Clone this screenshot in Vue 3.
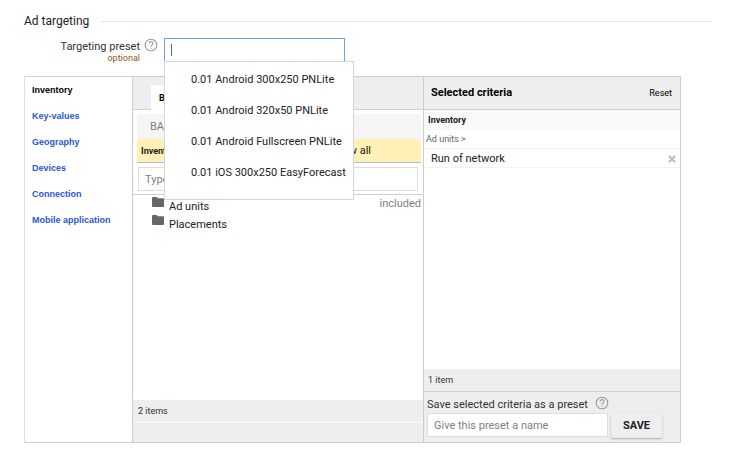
<script setup>
import { ref } from 'vue'

const preset = ref('')
const filter = ref('')
const presetName = ref('')
const presets = [
  '0.01 Android 300x250 PNLite',
  '0.01 Android 320x50 PNLite',
  '0.01 Android Fullscreen PNLite',
  '0.01 iOS 300x250 EasyForecast',
]
const sections = ['Inventory', 'Key-values', 'Geography', 'Devices', 'Connection', 'Mobile application']
const folders = [
  { name: 'Ad units', state: 'included' },
  { name: 'Placements', state: '' },
]
</script>

<template>
  <main class="page">
    <header class="heading">
      <h1>Ad targeting</h1>
      <span class="rule"></span>
    </header>

    <div class="preset-row">
      <label class="preset-label" for="preset">
        Targeting preset
        <small>optional</small>
      </label>
      <svg class="help" viewBox="0 0 14 14" aria-hidden="true">
        <circle cx="7" cy="7" r="5.8" />
        <path d="M5.1 5.6a1.9 1.9 0 1 1 3 1.5C7.4 7.6 7 7.9 7 8.7M7 9.7v1.1" />
      </svg>
      <div class="combo">
        <input id="preset" v-model="preset" type="text" autocomplete="off" />
        <span class="caret"></span>
        <ul class="menu">
          <li v-for="p in presets" :key="p"><button type="button" @click="preset = p">{{ p }}</button></li>
        </ul>
      </div>
    </div>

    <section class="panel">
      <nav class="sections">
        <a v-for="(s, i) in sections" :key="s" href="#" :class="{ current: i === 0 }">{{ s }}</a>
      </nav>

      <div class="browser">
        <div class="tabs"><button type="button" class="tab">Browse</button></div>
        <div class="tools">
          <button type="button" class="back">BACK</button>
          <div class="notice"><b>Inventory</b><a href="#">Show all</a></div>
          <input v-model="filter" class="field" type="text" aria-label="Filter" placeholder="Type to filter" />
        </div>
        <ul class="folders">
          <li v-for="f in folders" :key="f.name">
            <svg class="folder" viewBox="0 0 12 10" aria-hidden="true">
              <path d="M1 0h3.6l1.2 1.3H11q1 0 1 1V9q0 1-1 1H1Q0 10 0 9V1Q0 0 1 0z" />
            </svg>
            <span>{{ f.name }}</span>
            <em>{{ f.state }}</em>
          </li>
        </ul>
        <div class="count">2 items</div>
        <div class="base"></div>
      </div>

      <div class="selected">
        <div class="selected-head">
          <h2>Selected criteria</h2>
          <button type="button" class="reset">Reset</button>
        </div>
        <h3>Inventory</h3>
        <div class="path">Ad units &gt;</div>
        <div class="criterion">
          <span>Run of network</span>
          <button type="button" class="remove" aria-label="Remove">
            <svg viewBox="0 0 8 8"><path d="M1 1l6 6M7 1l-6 6" /></svg>
          </button>
        </div>
        <div class="count bottom">1 item</div>
        <form class="save" @submit.prevent>
          <div class="save-label">
            <label for="name">Save selected criteria as a preset</label>
            <svg class="help" viewBox="0 0 14 14" aria-hidden="true">
              <circle cx="7" cy="7" r="5.8" />
              <path d="M5.1 5.6a1.9 1.9 0 1 1 3 1.5C7.4 7.6 7 7.9 7 8.7M7 9.7v1.1" />
            </svg>
          </div>
          <div class="save-line">
            <input id="name" v-model="presetName" class="field" type="text" placeholder="Give this preset a name" />
            <button type="submit">SAVE</button>
          </div>
        </form>
      </div>
    </section>
  </main>
</template>

<style>
body {
  background: #fff;
}
</style>

<style scoped>
* {
  box-sizing: border-box;
}
.page {
  padding: 12px 56px 20px 24px;
  font: 11px/16px Roboto, sans-serif;
  color: #333;
}
h1, h2, h3, ul {
  margin: 0;
  padding: 0;
}
ul {
  list-style: none;
}
button, input {
  font: inherit;
  color: inherit;
  border: 0;
  margin: 0;
  padding: 0;
  background: none;
}
input::placeholder {
  color: #808080;
  opacity: 1;
}
a {
  text-decoration: none;
  color: inherit;
}
.heading {
  display: flex;
  align-items: center;
  gap: 12px;
  height: 18px;
  margin-right: -31px;
}
h1 {
  font-size: 12px;
  font-weight: 400;
  color: #222;
}
.rule {
  flex: 1;
  height: 1px;
  background: #e8e8e8;
}
.preset-row {
  display: flex;
  align-items: flex-start;
  height: 46px;
  padding-top: 8px;
}
.preset-label {
  width: 116px;
  padding-top: 1px;
  text-align: right;
}
.preset-label small {
  display: block;
  font-size: 9px;
  line-height: 6px;
  color: #8a5a22;
}
.help {
  flex: none;
  width: 14px;
  height: 14px;
  fill: none;
  stroke: #999;
  stroke-width: 1.1;
}
.preset-row .help {
  margin: 0 6px 0 4px;
}
.combo {
  position: relative;
  width: 181px;
}
.combo input {
  display: block;
  width: 100%;
  height: 24px;
  padding: 0 6px;
  border: 1px solid #6f9eee;
  outline: 0;
  background: #fff;
  caret-color: transparent;
}
.caret {
  position: absolute;
  left: 7px;
  top: 6px;
  width: 1px;
  height: 12px;
  background: #666;
}
.menu {
  position: absolute;
  z-index: 2;
  top: 23px;
  left: 0;
  width: 190px;
  padding: 2px 0 11px;
  border: 1px solid #d5d5d5;
  background: #fff;
}
.menu button {
  display: block;
  width: 100%;
  height: 31px;
  padding-left: 26px;
  text-align: left;
  color: #222;
  white-space: nowrap;
}
.panel {
  display: grid;
  grid-template-columns: 107px minmax(0, 1fr) 257px;
  min-height: 367px;
  border: 1px solid #cfcfcf;
  border-left-color: #e0e0e0;
}
.sections {
  display: flex;
  flex-direction: column;
  gap: 10px;
  padding: 5px 7px;
  font: bold 9px/16px "Liberation Sans", sans-serif;
  color: #2a56d6;
}
.sections .current {
  color: #000;
}
.browser {
  display: flex;
  flex-direction: column;
  border-left: 1px solid #ccc;
}
.tabs {
  display: flex;
  align-items: flex-end;
  height: 33px;
  padding-left: 18px;
  border-bottom: 1px solid #d0d0d0;
  background: #eee;
}
.tab {
  height: 25px;
  margin-bottom: -1px;
  padding: 0 8px;
  font-size: 9px;
  font-weight: 700;
  color: #000;
  background: #fff;
}
.tools {
  display: flex;
  flex-direction: column;
  padding: 4px 2px 3px 4px;
  border-bottom: 1px solid #d0d0d0;
}
.back {
  height: 25px;
  padding-left: 13px;
  border-radius: 3px;
  text-align: left;
  color: #808080;
  background: #f5f5f5;
}
.notice {
  display: flex;
  justify-content: space-between;
  height: 24px;
  padding: 0 50px 0 4px;
  border-bottom: 1px solid #a9c2d8;
  line-height: 24px;
  background: #fff1b5;
  color: #222;
}
.notice b {
  font-size: 9px;
}
.field {
  height: 24px;
  padding: 0 6px;
  border: 1px solid #ddd;
  background: #fff;
}
.tools .field {
  margin: 4px 3px 0 1px;
}
.folders {
  flex: 1;
  padding-top: 2px;
}
.folders li {
  display: flex;
  gap: 5px;
  height: 18px;
  padding: 0 2px 0 19px;
  line-height: 19px;
  color: #222;
}
.folder {
  width: 12px;
  height: 10px;
  fill: #666;
}
.folders em {
  margin-left: auto;
  font-style: normal;
  line-height: 14px;
  color: #808080;
}
.count {
  height: 23px;
  padding-left: 5px;
  border-bottom: 1px solid #fafafa;
  font-size: 9px;
  line-height: 22px;
  background: #eee;
}
.base {
  height: 19px;
  background: #eee;
}
.selected {
  display: flex;
  flex-direction: column;
  border-left: 1px solid #ccc;
}
.selected-head {
  display: flex;
  align-items: center;
  justify-content: space-between;
  height: 33px;
  padding: 0 8px 0 7px;
  border-bottom: 1px solid #d0d0d0;
  background: #eee;
  color: #000;
}
h2 {
  font-size: 11px;
}
.reset {
  font-size: 9px;
}
h3 {
  height: 20px;
  padding-left: 4px;
  font-size: 9px;
  line-height: 20px;
  color: #222;
  background: #f9f9f9;
}
.path {
  height: 19px;
  padding-left: 2px;
  font-size: 9px;
  line-height: 18px;
  color: #666;
  border-bottom: 1px solid #f3f3f3;
}
.criterion {
  display: flex;
  align-items: center;
  justify-content: space-between;
  height: 19px;
  padding: 2px 4px 0 7px;
  border-bottom: 1px solid #f3f3f3;
  color: #222;
}
.remove {
  display: flex;
  width: 8px;
  height: 8px;
}
.remove svg {
  width: 8px;
  height: 8px;
  stroke: #bbb;
  stroke-width: 2;
}
.bottom {
  margin-top: auto;
  padding-left: 4px;
  border-bottom-color: #d4d4d4;
}
.save {
  height: 50px;
  padding: 4px 3px;
  background: #eee;
}
.save-label {
  display: flex;
  align-items: flex-start;
  gap: 7px;
  height: 17px;
  line-height: 18px;
}
.save-line {
  display: flex;
  gap: 3px;
}
.save-line .field {
  width: 181px;
}
.save-line button {
  width: 51px;
  height: 25px;
  border-radius: 2px;
  font-weight: 700;
  color: #222;
  background: #eee;
  box-shadow: 0 1px 2px #aaa;
}
</style>
